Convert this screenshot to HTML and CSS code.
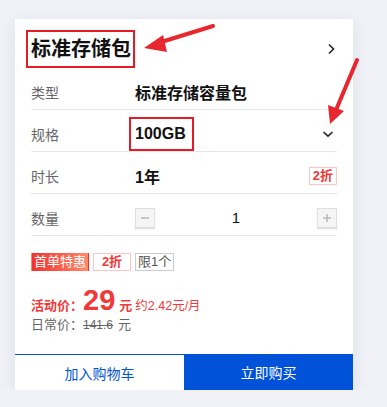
FILE: index.html
```html
<!DOCTYPE html>
<html>
  <head>
    <meta charset="utf-8">
    <title>标准存储包</title>
    <link rel="stylesheet" href="styles.css">
  </head>
  <body>
    <div class="page">
      <div class="card">
        <div class="card-head">
          <span class="title marked">标准存储包</span>
          <svg class="chev" width="10" height="12" viewBox="0 0 10 12"><path d="M3 1.5 L7.5 6 L3 10.5" fill="none" stroke="#222" stroke-width="1.6"/></svg>
        </div>

        <div class="rows">
          <div class="row">
            <span class="label">类型</span>
            <span class="value">标准存储容量包</span>
          </div>
          <div class="row">
            <span class="label">规格</span>
            <span class="value"><span class="marked marked-spec">100GB</span></span>
            <svg class="chev" width="12" height="8" viewBox="0 0 12 8"><path d="M1.5 2 L6 6.2 L10.5 2" fill="none" stroke="#222" stroke-width="1.6"/></svg>
          </div>
          <div class="row">
            <span class="label">时长</span>
            <span class="value">1年</span>
            <span class="tag tag-pink">2折</span>
          </div>
          <div class="row">
            <span class="label">数量</span>
            <div class="stepper">
              <span class="step">
                <svg width="10" height="10" viewBox="0 0 10 10"><path d="M1 5 H9" stroke="#bbb" stroke-width="1.6"/></svg>
              </span>
              <span class="count">1</span>
              <span class="step">
                <svg width="10" height="10" viewBox="0 0 10 10"><path d="M1 5 H9 M5 1 V9" stroke="#bbb" stroke-width="1.6"/></svg>
              </span>
            </div>
          </div>
        </div>

        <div class="tags">
          <span class="tag tag-hot">首单特惠</span>
          <span class="tag tag-pink tag-wide">2折</span>
          <span class="tag tag-gray">限1个</span>
        </div>

        <div class="prices">
          <div class="price-now">
            <span class="price-label">活动价：</span>
            <span class="price-num">29</span>
            <span class="price-unit">元</span>
            <span class="price-month">约2.42元/月</span>
          </div>
          <div class="price-old">
            <span class="old-label">日常价：</span>
            <span class="old-num">141.6</span>
            <span class="old-unit">元</span>
          </div>
        </div>

        <div class="actions">
          <button class="btn btn-cart">加入购物车</button>
          <button class="btn btn-buy">立即购买</button>
        </div>
      </div>
    </div>

    <!-- annotation arrows drawn over the page -->
    <svg class="arrows" width="387" height="407" viewBox="0 0 387 407">
      <path d="M213 26 L158 43" stroke="#e8262d" stroke-width="4" stroke-linecap="round"/>
      <path d="M144 48 L163 35 L167 52 Z" fill="#e8262d"/>
      <path d="M357 60 L336 110" stroke="#e8262d" stroke-width="4" stroke-linecap="round"/>
      <path d="M330 124 L328 105 L344 111 Z" fill="#e8262d"/>
    </svg>
  </body>
</html>
```

FILE: styles.css
```css
body {
  margin: 0;
  background-color: #f0f2f7;
  font-family: "Liberation Sans", "Noto Sans CJK SC", sans-serif;
  color: #111;
}
.page {
  padding: 19px 0 0 15px;
}
.card {
  width: 338px;
  background-color: white;
  box-shadow: 0 4px 18px rgba(0, 30, 80, 0.08);
}
.card-head {
  display: flex;
  justify-content: space-between;
  align-items: center;
  height: 28px;
  padding: 16px 17px 5px 16px;
}
.title {
  font-size: 20px;
  font-weight: bold;
  line-height: 28px;
}
.marked {
  position: relative;
}
.marked::after {
  content: "";
  position: absolute;
  left: -5px;
  right: -4px;
  top: -5px;
  bottom: -5px;
  border: 2px solid #e51c23;
}
.marked-spec::after {
  left: -6px;
  right: -8px;
  top: -8px;
  bottom: -9px;
}
.rows {
  padding: 0 16px;
}
.row {
  display: flex;
  align-items: center;
  height: 31px;
  padding-top: 8px;
  padding-bottom: 2px;
  border-bottom: 1px solid #e7e8ec;
}
.row .chev {
  margin-right: 3px;
}
.label {
  width: 104px;
  font-size: 14px;
  color: #666;
}
.value {
  flex: 1;
  font-size: 16px;
  font-weight: bold;
}
.tag {
  display: inline-block;
  height: 16px;
  line-height: 16px;
  padding: 0 3px;
  font-size: 13px;
  border: 1px solid transparent;
}
.tag-pink {
  color: #f03a3a;
  border-color: #ffc4c4;
  font-weight: bold;
}
.tag-wide {
  width: 30px;
  text-align: center;
}
.tag-hot {
  color: white;
  padding: 0 2px;
  background: linear-gradient(90deg, #f2312f, #ff8a6a);
}
.tag-gray {
  color: #555;
  border-color: #c6ccd8;
  padding: 0 2px;
}
.stepper {
  flex: 1;
  display: flex;
  justify-content: space-between;
  align-items: center;
}
.step {
  display: flex;
  align-items: center;
  justify-content: center;
  width: 18px;
  height: 18px;
  background-color: #f5f5f5;
  border: 1px solid #e0e0e0;
  box-shadow: 0 1px 1px rgba(0, 0, 0, 0.12);
}
.count {
  font-size: 15px;
}
.tags {
  display: flex;
  gap: 4px;
  margin-top: 17px;
  padding: 0 16px;
}
.prices {
  padding: 13px 16px 0;
}
.price-now {
  display: flex;
  align-items: baseline;
  height: 30px;
  white-space: nowrap;
  color: #f03a3a;
}
.price-label {
  font-size: 13px;
  font-weight: bold;
}
.price-num {
  font-size: 29px;
  font-weight: bold;
  margin-right: 4px;
}
.price-unit {
  font-size: 13px;
  font-weight: bold;
  margin-right: 3px;
}
.price-month {
  font-size: 12.5px;
}
.price-old {
  display: flex;
  align-items: baseline;
  height: 20px;
  white-space: nowrap;
  font-size: 13px;
  color: #666;
}
.old-num {
  font-size: 12px;
  text-decoration: line-through;
  margin-right: 5px;
}
.actions {
  display: flex;
  margin-top: 20px;
}
.btn {
  flex: 1;
  height: 36px;
  border: 0;
  font-family: inherit;
  font-size: 14px;
  cursor: pointer;
}
.btn-cart {
  background-color: white;
  color: #0052d9;
  border-top: 1px solid #0052d9;
}
.btn-buy {
  background-color: #0052d9;
  color: white;
}
.arrows {
  position: absolute;
  left: 0;
  top: 0;
  pointer-events: none;
}
```
